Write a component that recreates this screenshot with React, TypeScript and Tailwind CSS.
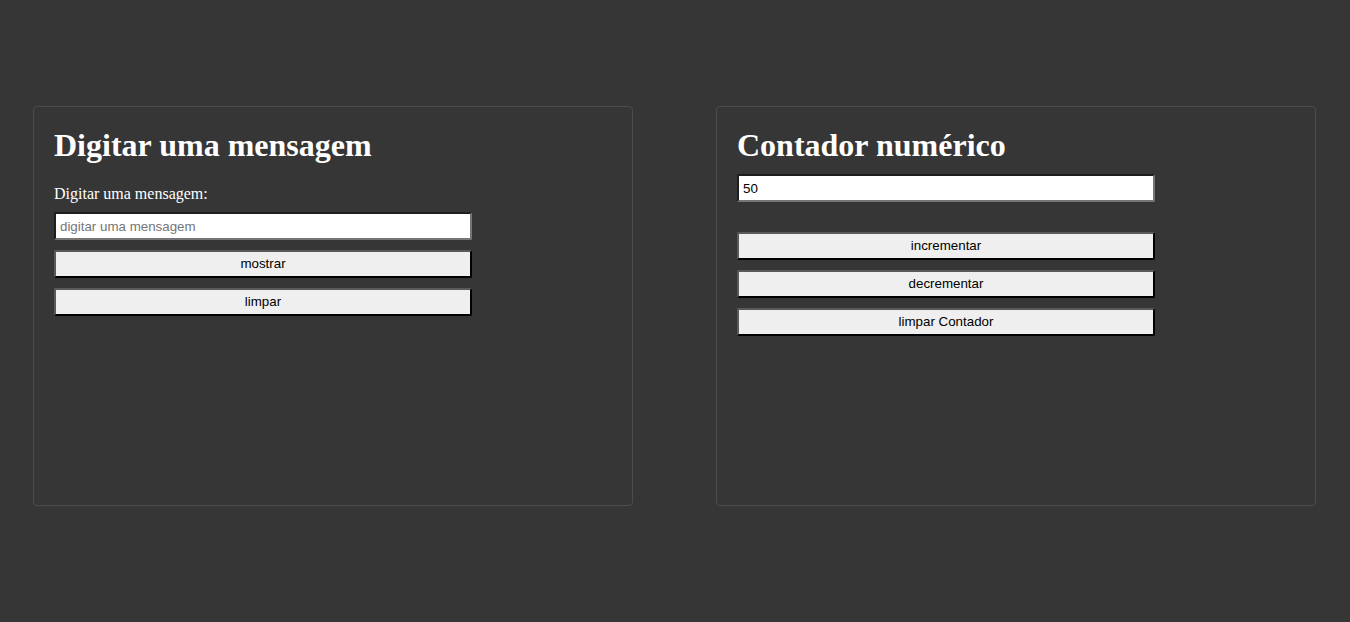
import { useState } from "react";

const inputCls =
  "h-[28px] w-[418px] rounded-[2px] border-2 border-t-[#1e1e1e] border-l-[#1e1e1e] border-b-[#767676] border-r-[#767676] bg-white px-[4px] text-[13.33px] text-black outline-none placeholder:text-[#757575] font-['Liberation_Sans',Arial,sans-serif]";

const btnCls =
  "h-[28px] w-[418px] rounded-[2px] border-2 border-t-[#5a5a5a] border-l-[#5a5a5a] border-b-black border-r-black bg-[#efefef] text-[13.33px] text-black font-['Liberation_Sans',Arial,sans-serif]";

export default function App() {
  const [msg, setMsg] = useState("");
  const [count, setCount] = useState(50);

  return (
    <div className="min-h-[622px] w-full bg-[#363636] pt-[106px] pl-[33px] font-['Liberation_Serif','Times_New_Roman',serif]">
      <div className="flex gap-[83px]">
        {/* Mensagem */}
        <div className="h-[400px] w-[600px] rounded-[4px] border border-[#4c4c4c] p-[20px]">
          <h1 className="text-[32px] font-bold leading-[37px] text-white">Digitar uma mensagem</h1>
          <label className="mt-[21px] block text-[16px] leading-[18px] text-white">Digitar uma mensagem:</label>
          <div className="mt-[9px] flex flex-col gap-[10px]">
            <input
              className={inputCls}
              placeholder="digitar uma mensagem"
              value={msg}
              onChange={(e) => setMsg(e.target.value)}
            />
            <button className={btnCls}>mostrar</button>
            <button className={btnCls} onClick={() => setMsg("")}>
              limpar
            </button>
          </div>
        </div>

        {/* Contador */}
        <div className="h-[400px] w-[600px] rounded-[4px] border border-[#4c4c4c] p-[20px]">
          <h1 className="text-[32px] font-bold leading-[37px] text-white">Contador numérico</h1>
          <input
            className={inputCls + " mt-[10px] block"}
            value={count}
            readOnly
          />
          <div className="mt-[30px] flex flex-col gap-[10px]">
            <button className={btnCls} onClick={() => setCount(count + 1)}>
              incrementar
            </button>
            <button className={btnCls} onClick={() => setCount(count - 1)}>
              decrementar
            </button>
            <button className={btnCls} onClick={() => setCount(0)}>
              limpar Contador
            </button>
          </div>
        </div>
      </div>
    </div>
  );
}
